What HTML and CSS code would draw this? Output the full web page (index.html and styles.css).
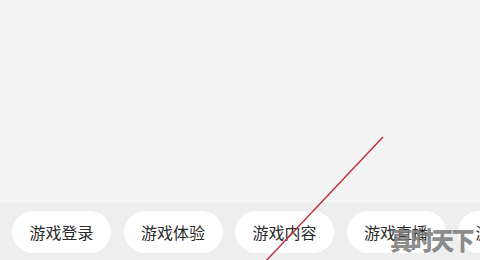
FILE: index.html
```html
<!DOCTYPE html>
<html>
<head>
<meta charset="utf-8">
<link rel="stylesheet" href="styles.css">
</head>
<body>
<div class="page">
  <div class="content"></div>
  <div class="bar">
    <div class="pill">游戏登录</div>
    <div class="pill">游戏体验</div>
    <div class="pill">游戏内容</div>
    <div class="pill">游戏直播</div>
    <div class="pill">游戏攻略</div>
  </div>
  <svg class="stroke" width="480" height="260" viewBox="0 0 480 260">
    <line x1="383" y1="137" x2="265" y2="262" stroke="#c22a38" stroke-width="1.4"/>
  </svg>
  <div class="mark">真时天下</div>
</div>
</body>
</html>
```
FILE: styles.css
```css
html, body {
  margin: 0;
  padding: 0;
}
body {
  width: 480px;
  height: 260px;
  overflow: hidden;
  background: #f4f4f4;
  font-family: "Noto Sans CJK SC", "Noto Sans", sans-serif;
}
.page {
  position: relative;
  width: 480px;
  height: 260px;
  display: flex;
  flex-direction: column;
}
.content {
  height: 202px;
  background: #f4f4f4;
}
.bar {
  flex: 1;
  background: #eeeeee;
  display: flex;
  gap: 12.5px;
  padding: 9px 0 0 12px;
  overflow: hidden;
  white-space: nowrap;
}
.pill {
  flex: none;
  height: 42px;
  line-height: 42px;
  padding: 0 17.5px;
  border-radius: 21px;
  background: #ffffff;
  color: #2b2b2b;
  font-size: 16px;
}
.stroke {
  position: absolute;
  left: 0;
  top: 0;
}
.mark {
  position: absolute;
  left: 390px;
  top: 220px;
  font-size: 23px;
  line-height: 34px;
  font-weight: 900;
  color: rgba(125, 125, 125, 0.9);
  letter-spacing: -2.5px;
  transform: scaleY(1.1);
  transform-origin: left top;
}
```
